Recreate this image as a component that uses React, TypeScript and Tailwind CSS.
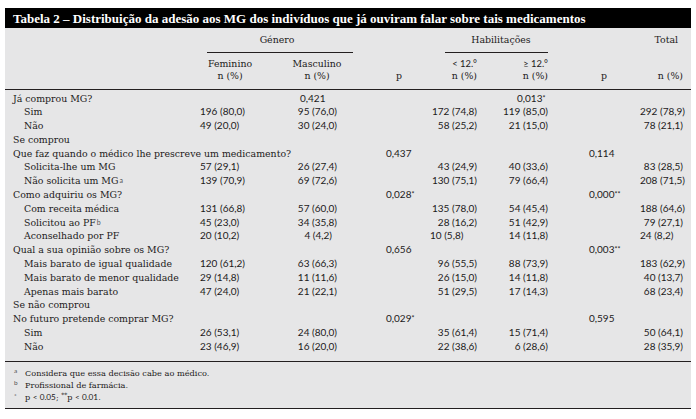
import React from "react";

const SERIF = "font-['DejaVu_Serif',serif]";
const SANS = "font-['Lato',sans-serif]";

const W = ["w-[195px]", "w-[60px]", "w-[90px]", "w-[80px]", "w-[55px]", "w-[71px]", "w-[84px]", "w-[50px]"];
const NUMPAD = ["", "pr-[21px]", "pr-[13px]", "", "pr-[8px]", "pr-[8px]", "", "pr-[7px]"];
const PPAD = ["", "", "pl-[40px]", "pl-[36px]", "", "pl-[32px]", "pl-[33px]", ""];
const SPECIAL: Record<string, string> = {
  "4 (4,2)": "pr-[18px]",
  "10 (5,8)": "pr-[22px]",
  "24 (8,2)": "pr-[22px]",
};

type Row = { label: string; sub?: boolean; sup?: string; v?: string[] };

const rows: Row[] = [
  { label: "Já comprou MG?", v: ["", "0,421", "", "", "0,013*", "", ""] },
  { label: "Sim", sub: true, v: ["196 (80,0)", "95 (76,0)", "", "172 (74,8)", "119 (85,0)", "", "292 (78,9)"] },
  { label: "Não", sub: true, v: ["49 (20,0)", "30 (24,0)", "", "58 (25,2)", "21 (15,0)", "", "78 (21,1)"] },
  { label: "Se comprou" },
  { label: "Que faz quando o médico lhe prescreve um medicamento?", v: ["", "", "0,437", "", "", "0,114", ""] },
  { label: "Solicita-lhe um MG", sub: true, v: ["57 (29,1)", "26 (27,4)", "", "43 (24,9)", "40 (33,6)", "", "83 (28,5)"] },
  { label: "Não solicita um MG", sub: true, sup: "a", v: ["139 (70,9)", "69 (72,6)", "", "130 (75,1)", "79 (66,4)", "", "208 (71,5)"] },
  { label: "Como adquiriu os MG?", v: ["", "", "0,028*", "", "", "0,000**", ""] },
  { label: "Com receita médica", sub: true, v: ["131 (66,8)", "57 (60,0)", "", "135 (78,0)", "54 (45,4)", "", "188 (64,6)"] },
  { label: "Solicitou ao PF", sub: true, sup: "b", v: ["45 (23,0)", "34 (35,8)", "", "28 (16,2)", "51 (42,9)", "", "79 (27,1)"] },
  { label: "Aconselhado por PF", sub: true, v: ["20 (10,2)", "4 (4,2)", "", "10 (5,8)", "14 (11,8)", "", "24 (8,2)"] },
  { label: "Qual a sua opinião sobre os MG?", v: ["", "", "0,656", "", "", "0,003**", ""] },
  { label: "Mais barato de igual qualidade", sub: true, v: ["120 (61,2)", "63 (66,3)", "", "96 (55,5)", "88 (73,9)", "", "183 (62,9)"] },
  { label: "Mais barato de menor qualidade", sub: true, v: ["29 (14,8)", "11 (11,6)", "", "26 (15,0)", "14 (11,8)", "", "40 (13,7)"] },
  { label: "Apenas mais barato", sub: true, v: ["47 (24,0)", "21 (22,1)", "", "51 (29,5)", "17 (14,3)", "", "68 (23,4)"] },
  { label: "Se não comprou" },
  { label: "No futuro pretende comprar MG?", v: ["", "", "0,029*", "", "", "0,595", ""] },
  { label: "Sim", sub: true, v: ["26 (53,1)", "24 (80,0)", "", "35 (61,4)", "15 (71,4)", "", "50 (64,1)"] },
  { label: "Não", sub: true, v: ["23 (46,9)", "16 (20,0)", "", "22 (38,6)", "6 (28,6)", "", "28 (35,9)"] },
];

function Cell({ text, col }: { text: string; col: number }) {
  if (!text) return <div className={W[col]} />;
  const isNum = text.includes("(");
  if (isNum) {
    const pad = SPECIAL[text] ?? NUMPAD[col];
    return <div className={`${W[col]} ${pad} text-right whitespace-nowrap ${SANS} text-[10px]`}>{text}</div>;
  }
  const m = text.match(/^([^*]+)(\**)$/);
  const base = m ? m[1] : text;
  const stars = m ? m[2] : "";
  return (
    <div className={`${W[col]} ${PPAD[col]} text-left whitespace-nowrap ${SANS} text-[10px]`}>
      {base}
      {stars && <sup className="text-[7px] relative -top-[1px]">{stars}</sup>}
    </div>
  );
}

export default function App() {
  return (
    <div className="w-[696px] h-[419px] bg-white pt-[8px] pl-[5px] text-[#1c1a1a]">
      <div className="w-[686px]">
        <div className="h-[20px] bg-black flex items-center pl-[8px]">
          <span className="font-['Liberation_Serif',serif] font-bold text-[13px] text-white whitespace-nowrap leading-none">
            Tabela 2 – Distribuição da adesão aos MG dos indivíduos que já ouviram falar sobre tais medicamentos
          </span>
        </div>
        <div className={`bg-[#e6e6e7] border-b border-[#231f20] ${SERIF} text-[9.4px]`}>
          {/* header row 1 */}
          <div className="flex h-[25px]">
            <div className="w-[202px]" />
            <div className="w-[146px] border-b border-[#231f20] flex items-center justify-center pr-[6px]">Género</div>
            <div className="w-[92px]" />
            <div className="w-[103px] border-b border-[#231f20] flex items-center justify-center pl-[9px]">Habilitações</div>
            <div className="w-[93px]" />
            <div className="w-[50px] flex items-center justify-end pr-[13px]">Total</div>
          </div>
          {/* header row 2 */}
          <div className="flex pt-[5px] pb-[7px] leading-[12px] border-b border-[#231f20]">
            <div className={W[0]} />
            <div className={`${W[1]} text-center`}>
              <div>Feminino</div>
              <div>n (%)</div>
            </div>
            <div className={`${W[2]} text-center pl-[24px]`}>
              <div>Masculino</div>
              <div>n (%)</div>
            </div>
            <div className={`${W[3]} pl-[46px]`}>
              <div>&nbsp;</div>
              <div>p</div>
            </div>
            <div className={`${W[4]} text-right pr-[8px]`}>
              <div className={SANS}>&lt; 12.°</div>
              <div>n (%)</div>
            </div>
            <div className={`${W[5]} text-right pr-[8px]`}>
              <div className={SANS}>≥ 12.°</div>
              <div>n (%)</div>
            </div>
            <div className={`${W[6]} pl-[45px]`}>
              <div>&nbsp;</div>
              <div>p</div>
            </div>
            <div className={`${W[7]} text-right pr-[7px]`}>
              <div>&nbsp;</div>
              <div>n (%)</div>
            </div>
          </div>
          {/* body */}
          <div className="pt-[1.5px] pb-[7px] border-b border-[#231f20]">
            {rows.map((r, i) => (
              <div key={i} className="flex h-[13.8px] items-center leading-[13.8px]">
                <div className={`${W[0]} ${r.sub ? "pl-[19px]" : "pl-[8px]"} whitespace-nowrap`}>
                  {r.label}
                  {r.sup && <sup className={`${SANS} text-[7px] relative -top-[1px] ml-[1px] text-[#555]`}>{r.sup}</sup>}
                </div>
                {(r.v ?? ["", "", "", "", "", "", ""]).map((t, j) => (
                  <Cell key={j} text={t} col={j + 1} />
                ))}
              </div>
            ))}
          </div>
          {/* footnotes */}
          <div className="pt-[5px] pb-[5px] text-[8.2px] leading-[12px]">
            <div className="flex pl-[9px]">
              <span className={`${SANS} w-[11px] text-[6.5px] relative -top-[2px] text-[#555]`}>a</span>
              <span>Considera que essa decisão cabe ao médico.</span>
            </div>
            <div className="flex pl-[9px]">
              <span className={`${SANS} w-[11px] text-[6.5px] relative -top-[2px] text-[#555]`}>b</span>
              <span>Profissional de farmácia.</span>
            </div>
            <div className="flex pl-[9px]">
              <span className={`${SANS} w-[11px] text-[6.5px] relative -top-[1px] text-[#555]`}>*</span>
              <span>
                p <span className={SANS}>&lt; 0.05</span>; <sup className="text-[6px]">**</sup>p <span className={SANS}>&lt; 0.01</span>.
              </span>
            </div>
          </div>
        </div>
      </div>
    </div>
  );
}
